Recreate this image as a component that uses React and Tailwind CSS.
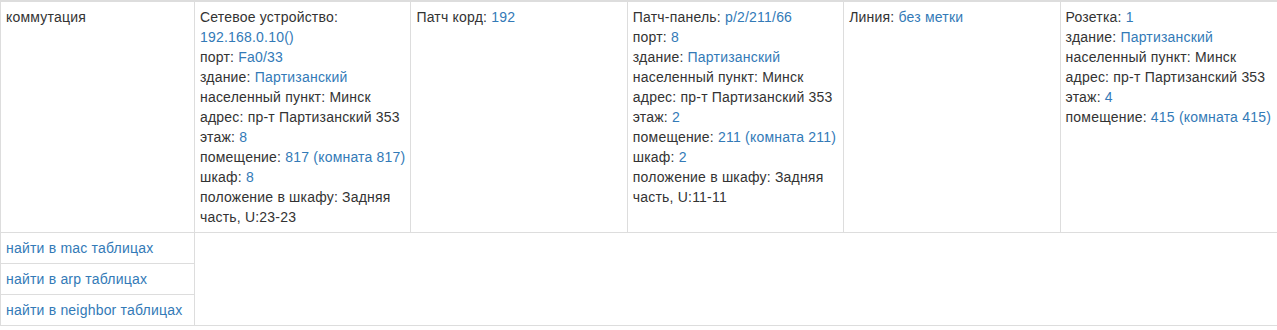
import React from "react";

const Link = ({ children }) => (
  <a href="#" className="text-[#337ab7] no-underline hover:underline">
    {children}
  </a>
);

// each line: [label, value shown as link]
const cells = [
  [
    ["Сетевое устройство:"],
    [null, "192.168.0.10()"],
    ["порт: ", "Fa0/33"],
    ["здание: ", "Партизанский"],
    ["населенный пункт: Минск"],
    ["адрес: пр-т Партизанский 353"],
    ["этаж: ", "8"],
    ["помещение: ", "817 (комната 817)"],
    ["шкаф: ", "8"],
    ["положение в шкафу: Задняя"],
    ["часть, U:23-23"],
  ],
  [["Патч корд: ", "192"]],
  [
    ["Патч-панель: ", "p/2/211/66"],
    ["порт: ", "8"],
    ["здание: ", "Партизанский"],
    ["населенный пункт: Минск"],
    ["адрес: пр-т Партизанский 353"],
    ["этаж: ", "2"],
    ["помещение: ", "211 (комната 211)"],
    ["шкаф: ", "2"],
    ["положение в шкафу: Задняя"],
    ["часть, U:11-11"],
  ],
  [["Линия: ", "без метки"]],
  [
    ["Розетка: ", "1"],
    ["здание: ", "Партизанский"],
    ["населенный пункт: Минск"],
    ["адрес: пр-т Партизанский 353"],
    ["этаж: ", "4"],
    ["помещение: ", "415 (комната 415)"],
  ],
];

const searches = [
  "найти в mac таблицах",
  "найти в arp таблицах",
  "найти в neighbor таблицах",
];

export default function App() {
  return (
    <div
      className="bg-white text-[14px] leading-[20px] tracking-[0.2px] text-[#333]"
      style={{ fontFamily: '"Liberation Sans", Arial, sans-serif' }}
    >
      <div className="border-l border-t-2 border-b border-[#ddd] shadow-[0_2px_2px_rgba(0,0,0,0.45)]">
        <div className="grid grid-cols-[194px_repeat(5,minmax(0,1fr))] border-b border-[#ddd]">
          <div className="border-r border-[#ddd] p-[5px]">коммутация</div>
          {cells.map((lines, i) => (
            <div
              key={i}
              className={
                i < cells.length - 1
                  ? "border-r border-[#ddd] p-[5px] whitespace-nowrap"
                  : "p-[5px] whitespace-nowrap"
              }
            >
              {lines.map(([label, value], j) => (
                <div key={j}>
                  {label}
                  {value && <Link>{value}</Link>}
                </div>
              ))}
            </div>
          ))}
        </div>
        <div className="grid grid-cols-[194px_1fr]">
          <div className="border-r border-[#ddd]">
            {searches.map((s, i) => (
              <div
                key={s}
                className={
                  i < searches.length - 1
                    ? "border-b border-[#ddd] p-[5px]"
                    : "p-[5px]"
                }
              >
                <Link>{s}</Link>
              </div>
            ))}
          </div>
          <div />
        </div>
      </div>
    </div>
  );
}
